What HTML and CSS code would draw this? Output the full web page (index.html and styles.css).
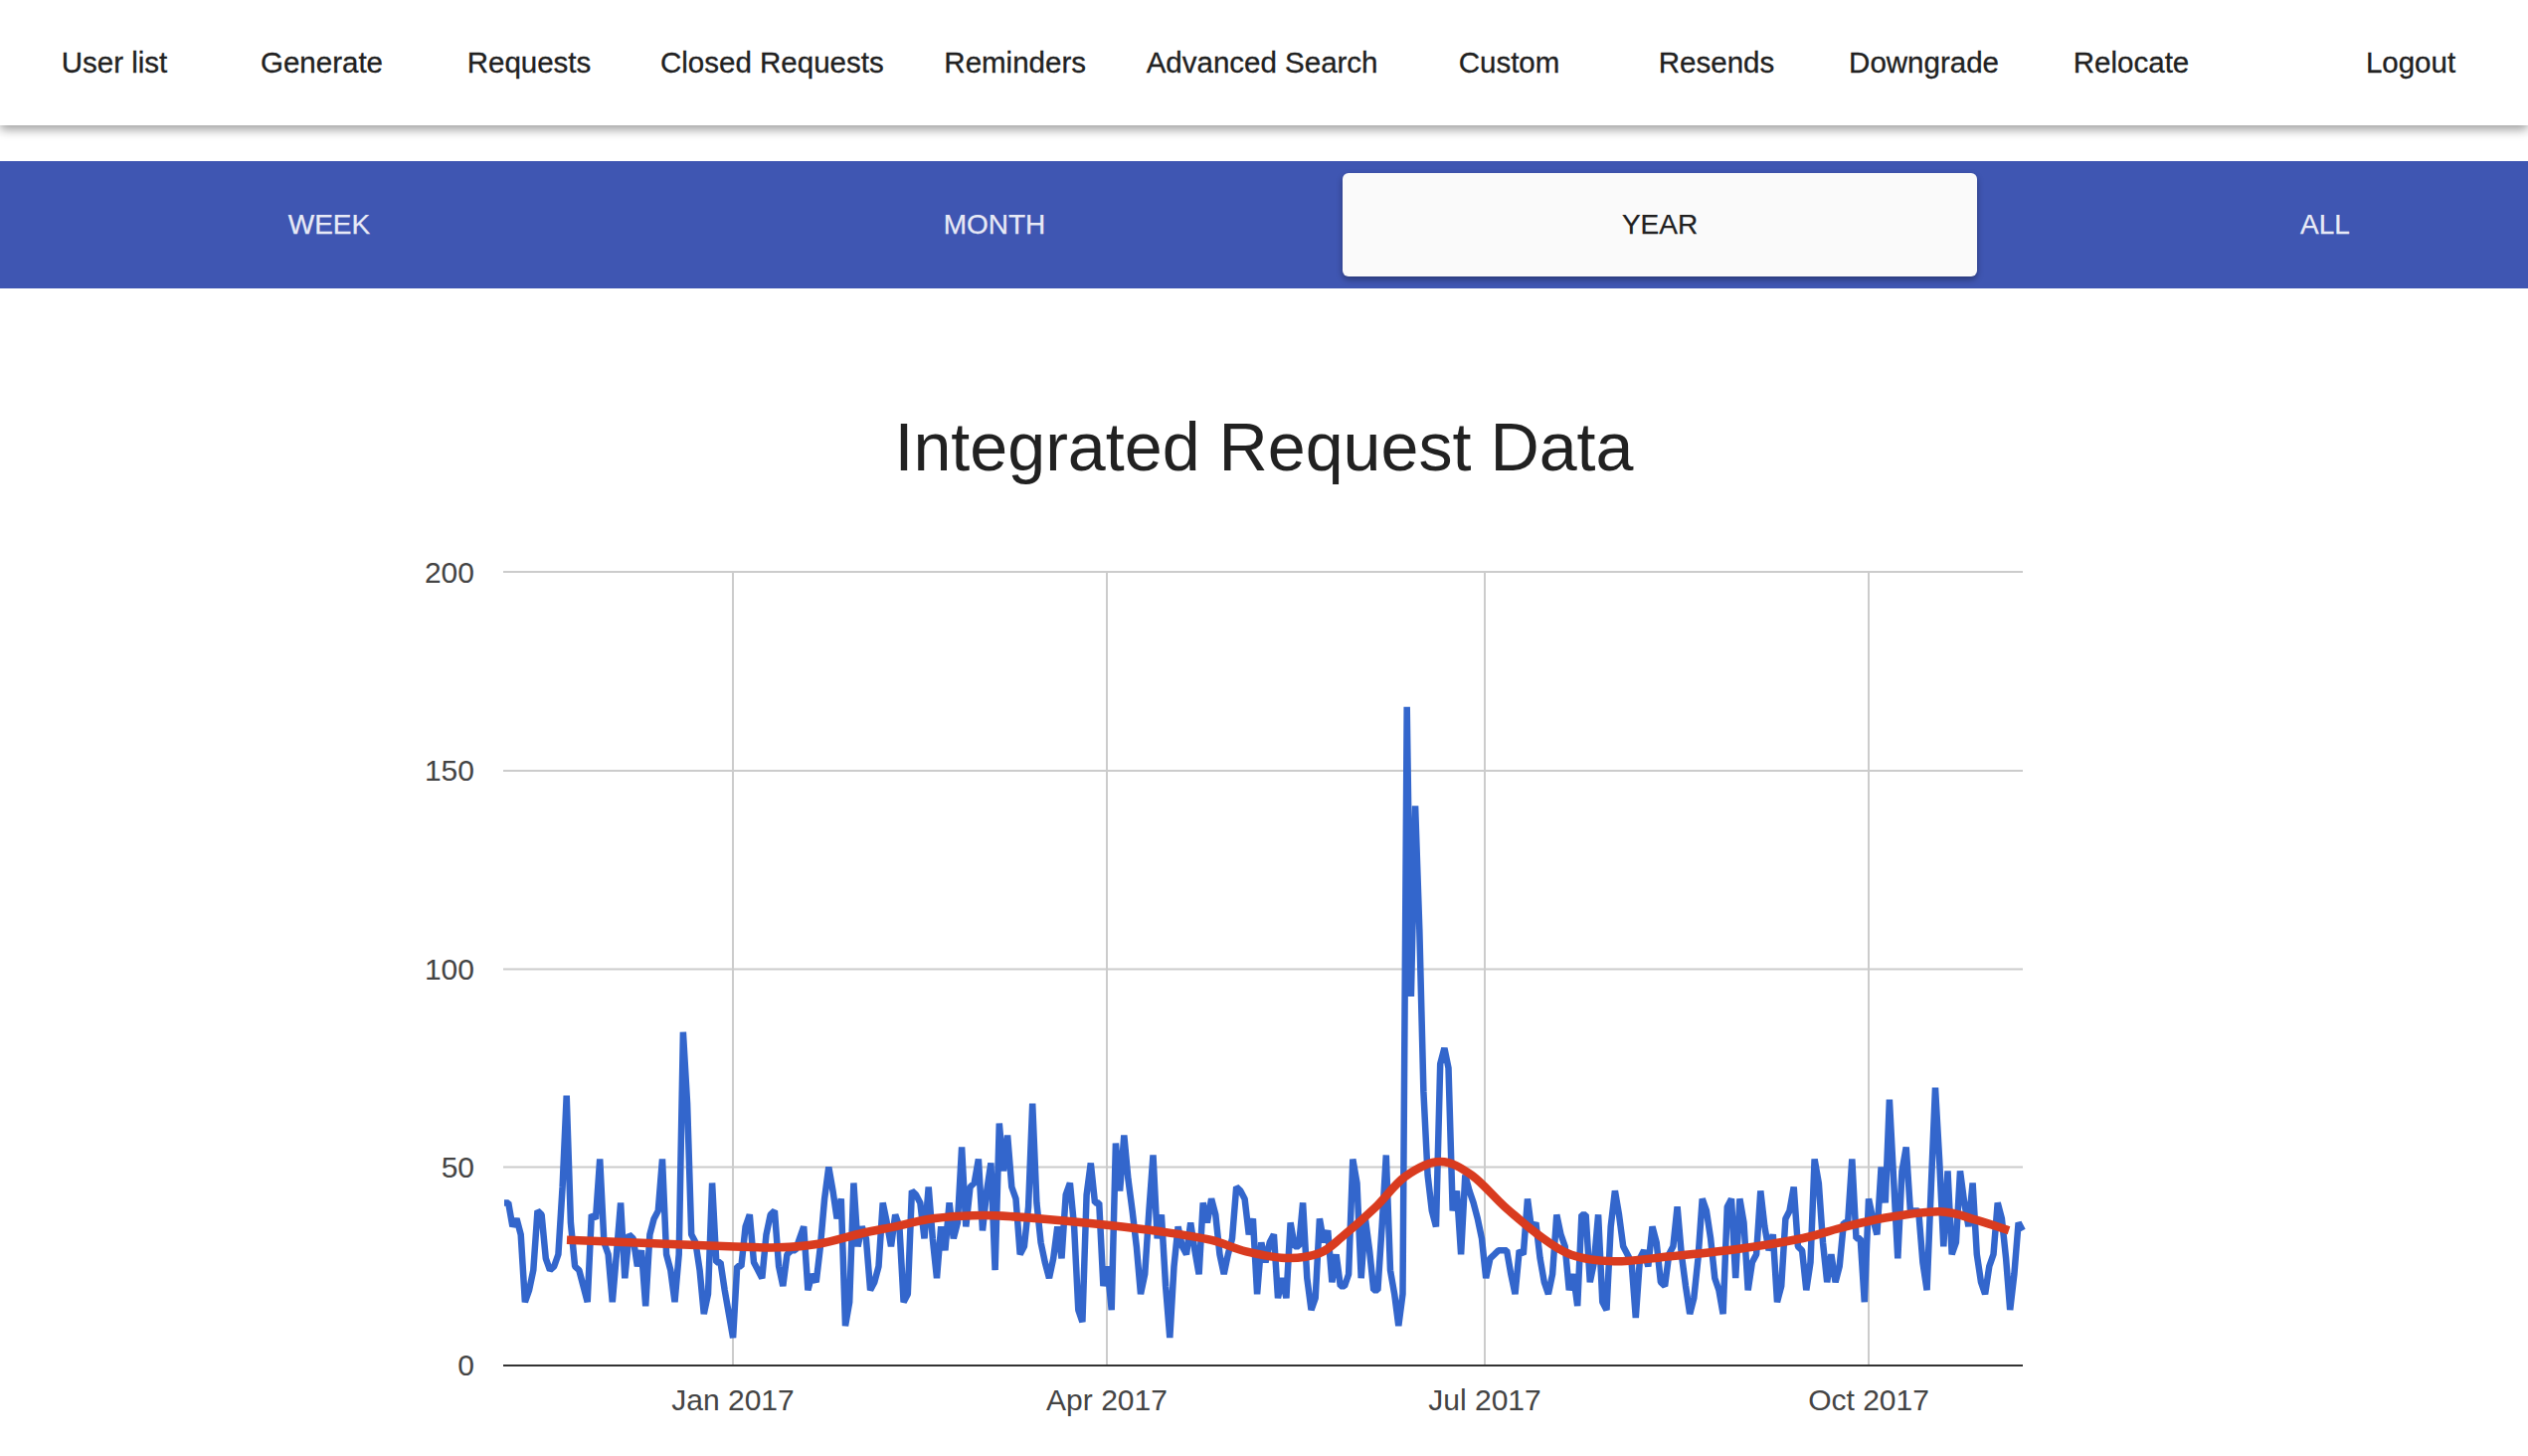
FILE: index.html
```html
<!DOCTYPE html>
<html lang="en">

<head>
    <title>Integrated Request Data</title>
    <meta charset="UTF-8">
    <meta name="viewport" content="width=device-width, initial-scale=1">
    <link rel="stylesheet" href="styles.css">
</head>

<body>
    <nav class="topbar">
        <a class="nav-btn">User list</a>
        <a class="nav-btn">Generate</a>
        <a class="nav-btn">Requests</a>
        <a class="nav-btn">Closed Requests</a>
        <a class="nav-btn">Reminders</a>
        <a class="nav-btn">Advanced Search</a>
        <a class="nav-btn">Custom</a>
        <a class="nav-btn">Resends</a>
        <a class="nav-btn">Downgrade</a>
        <a class="nav-btn">Relocate</a>
        <a class="nav-btn logout">Logout</a>
    </nav>

    <div class="ranges">
        <button class="range" type="button">WEEK</button>
        <button class="range" type="button">MONTH</button>
        <button class="range active" type="button">YEAR</button>
        <button class="range" type="button">ALL</button>
    </div>

    <h1 class="title">Integrated Request Data</h1>

    <!-- viewBox uses page coordinates so the numbers read straight off the screen -->
    <svg class="chart" viewBox="0 500 2542 964">
        <g class="grid">
            <line x1="506" x2="2034" y1="575" y2="575"></line>
            <line x1="506" x2="2034" y1="775" y2="775"></line>
            <line x1="506" x2="2034" y1="974.5" y2="974.5"></line>
            <line x1="506" x2="2034" y1="1173.5" y2="1173.5"></line>
            <line x1="737" x2="737" y1="575" y2="1372"></line>
            <line x1="1113" x2="1113" y1="575" y2="1372"></line>
            <line x1="1493" x2="1493" y1="575" y2="1372"></line>
            <line x1="1879" x2="1879" y1="575" y2="1372"></line>
        </g>
        <g class="y-labels">
            <text x="477" y="586">200</text>
            <text x="477" y="785">150</text>
            <text x="477" y="985">100</text>
            <text x="477" y="1184">50</text>
            <text x="477" y="1383">0</text>
        </g>
        <g class="x-labels">
            <text x="737" y="1418">Jan 2017</text>
            <text x="1113" y="1418">Apr 2017</text>
            <text x="1493" y="1418">Jul 2017</text>
            <text x="1879" y="1418">Oct 2017</text>
        </g>
        <polyline id="requests" class="series"></polyline>
        <line class="baseline" x1="506" x2="2034" y1="1373" y2="1373"></line>
        <path id="trend" class="trend"></path>
    </svg>

    <script src="chart.js"></script>
</body>

</html>
```

FILE: styles.css
```css
* {
    margin: 0;
    padding: 0;
    box-sizing: border-box;
}

html,
body {
    width: 2542px;
    height: 1464px;
    overflow: hidden;
}

body {
    background: #fff;
    color: #212121;
    font-family: "Liberation Sans", Arial, sans-serif;
}

.topbar {
    display: flex;
    align-items: center;
    gap: 32.5px;
    height: 126px;
    padding: 0 30px 0 27px;
    background: #fff;
    box-shadow: 0 4px 10px rgba(0, 0, 0, 0.4);
}

.nav-btn {
    min-width: 176px;
    padding: 0 11.5px;
    font-size: 29.5px;
    text-align: center;
    white-space: nowrap;
    -webkit-text-stroke: 0.3px #212121;
}

.logout {
    margin-left: auto;
}

.ranges {
    display: grid;
    grid-template-columns: repeat(4, 638px);
    gap: 31px;
    align-items: stretch;
    height: 128px;
    margin-top: 36px;
    padding: 12px 0 12px 12px;
    background: #3f56b2;
    overflow: hidden;
}

.range {
    border: 0;
    border-radius: 6px;
    background: transparent;
    color: #e8eaf6;
    font-family: inherit;
    font-size: 28px;
    -webkit-text-stroke: 0.25px currentColor;
}

.range.active {
    background: #fafafa;
    color: #212121;
    box-shadow: 0 3px 6px rgba(0, 0, 0, 0.35);
}

.title {
    margin-top: 118.5px;
    font-size: 68.2px;
    font-weight: 400;
    line-height: 80px;
    text-align: center;
}

.chart {
    display: block;
    width: 2542px;
    height: 964px;
    margin-top: 11.5px;
}

.grid line {
    stroke: #ccc;
    stroke-width: 2;
}

.baseline {
    stroke: #333;
    stroke-width: 2;
}

.y-labels text,
.x-labels text {
    fill: #444;
    font-size: 30px;
}

.y-labels text {
    text-anchor: end;
}

.x-labels text {
    text-anchor: middle;
}

.series {
    fill: none;
    stroke: #3366cc;
    stroke-width: 6.5;
    stroke-linejoin: bevel;
}

.trend {
    fill: none;
    stroke: #d93b1f;
    stroke-width: 8.5;
}
```

FILE: chart.js
```js
(function () {
    // requests per day, one value per day from the left edge of the plot
    var daily = [
        41, 41, 35, 37, 33, 16, 19, 24, 39, 38, 27, 24, 25, 28, 45, 68,
        36, 25, 24, 20, 16, 38, 37, 52, 31, 28, 16, 28, 41, 22, 33,
        32, 25, 29, 15, 33, 37, 39, 52, 28, 24, 16, 28, 84, 66, 33,
        31, 24, 13, 18, 46, 26, 26, 19, 13, 7, 25, 25, 35, 38, 26,
        24, 22, 33, 38, 39, 25, 20, 28, 29, 29, 32, 35, 19, 23, 21,
        30, 42, 50, 44, 37, 42, 10, 16, 46, 30, 35, 32, 19, 21, 25,
        41, 36, 30, 38, 35, 16, 18, 44,
        43, 41, 32, 45, 32, 22, 35, 29, 41, 32, 36, 55,
        35, 45, 46, 52, 34, 44, 51, 24, 61, 49, 58, 45, 42, 28, 30,
        40, 66, 41, 31, 26, 22, 27, 35, 27, 43, 46, 35, 14, 11, 43,
        51, 41, 41, 20, 25, 14, 56, 44, 58, 47, 39, 30, 18, 23, 39,
        53, 32, 38, 20, 7, 25, 35, 30, 28, 36, 29, 23, 41, 36, 42,
        38, 28, 23, 28, 32, 45, 44, 42, 33, 37, 18, 31, 26, 31, 33,
        17, 22, 17, 36, 30, 30, 41, 22, 14, 17, 37, 31, 34, 21, 28,
        20, 20, 23, 52, 46, 22, 37, 29, 19, 19, 35, 53, 24, 18, 10, 18,
        166, 93, 141, 110, 69, 48, 39, 35, 76, 80, 75,
        39, 44, 28, 48, 44, 41, 37, 32, 22, 27, 28, 29, 29, 29, 23, 18,
        29, 28, 42, 34, 36, 27, 21, 18, 23, 38, 33, 30, 19, 23, 15, 38,
        38, 21, 26, 38, 16, 14, 35, 44, 38, 30, 28, 26, 12, 27, 29, 25,
        35, 31, 21, 20, 28, 30, 40, 28, 20, 13, 17, 27, 42, 39, 32, 22,
        19, 13, 40, 42, 22, 42, 36, 19, 26, 28, 44, 35, 29, 33, 16, 20,
        37, 39, 45, 30, 29, 19, 26, 52, 46, 31, 21, 28, 21, 25, 36, 36,
        52, 32, 32, 16, 42, 37, 33, 50, 41, 67,
        47, 27, 49, 55, 39, 39, 39, 26, 19, 45, 70, 52, 30, 49, 28, 31,
        49, 41, 35, 46, 28, 21, 18, 25, 28, 41, 37, 27, 14, 23, 36, 34
    ];

    // trend line, read off in page pixels
    var trend = [
        [570, 1246.7], [633, 1249.3], [733, 1253.3], [783, 1254.3], [823, 1250.7],
        [867, 1240], [900, 1233.3], [933, 1226], [967, 1222.7], [1000, 1222.3],
        [1050, 1225.7], [1113, 1231.7], [1167, 1238.3], [1217, 1246.7], [1253, 1258.3],
        [1293, 1265], [1327, 1260], [1350, 1243.3], [1383, 1214], [1413, 1183],
        [1448, 1168], [1480, 1181.7], [1513, 1213.3], [1547, 1241.7], [1580, 1261.7],
        [1623, 1268.3], [1680, 1263.3], [1747, 1256], [1813, 1245], [1850, 1235],
        [1893, 1225], [1950, 1218.3], [1987, 1226.7], [2020, 1237.3]
    ];

    var x0 = 507,
        dayWidth = 4.183,
        zeroY = 1373,
        unit = 3.99;

    var points = [];
    for (var i = 0; i < daily.length; i++) {
        points.push((x0 + i * dayWidth).toFixed(1) + ',' + (zeroY - daily[i] * unit).toFixed(1));
    }
    document.getElementById('requests').setAttribute('points', points.join(' '));

    // catmull-rom through the points, so the trend stays smooth
    var d = 'M' + trend[0][0] + ' ' + trend[0][1];
    for (var j = 0; j < trend.length - 1; j++) {
        var p0 = trend[Math.max(j - 1, 0)],
            p1 = trend[j],
            p2 = trend[j + 1],
            p3 = trend[Math.min(j + 2, trend.length - 1)];
        d += ' C' + (p1[0] + (p2[0] - p0[0]) / 6).toFixed(1) + ' ' + (p1[1] + (p2[1] - p0[1]) / 6).toFixed(1) +
            ' ' + (p2[0] - (p3[0] - p1[0]) / 6).toFixed(1) + ' ' + (p2[1] - (p3[1] - p1[1]) / 6).toFixed(1) +
            ' ' + p2[0] + ' ' + p2[1];
    }
    document.getElementById('trend').setAttribute('d', d);
})();
```
